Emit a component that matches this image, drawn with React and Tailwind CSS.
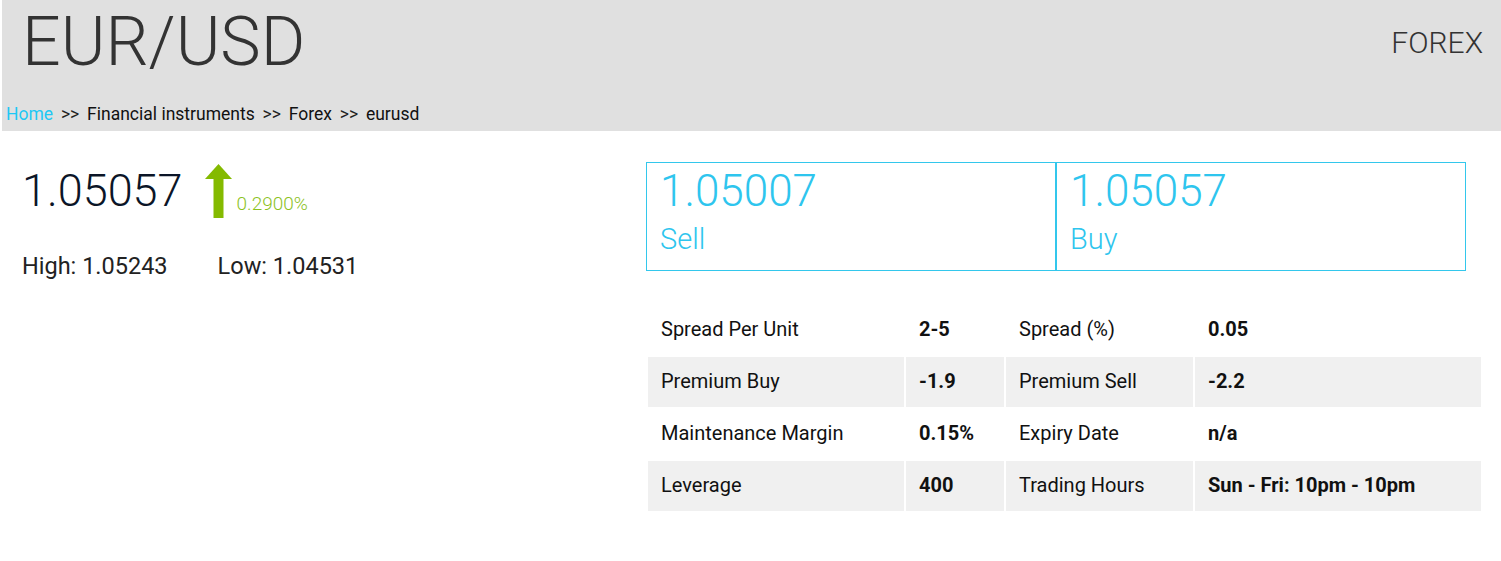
export default function App() {
  const rows = [
    ["Spread Per Unit", "2-5", "Spread (%)", "0.05"],
    ["Premium Buy", "-1.9", "Premium Sell", "-2.2"],
    ["Maintenance Margin", "0.15%", "Expiry Date", "n/a"],
    ["Leverage", "400", "Trading Hours", "Sun - Fri: 10pm - 10pm"],
  ];

  return (
    <div className="w-[1501px] min-h-[561px] bg-white font-['Roboto',sans-serif] text-[#222]">
      {/* header */}
      <div className="ml-[2px] h-[131px] bg-[#e0e0e0] flex flex-col">
        <div className="flex justify-between items-start">
          <h1 className="ml-[20px] mt-[2px] text-[68px] leading-[80px] font-light text-[#333]">EUR/USD</h1>
          <div className="mr-[18px] mt-[26px] text-[30px] leading-[34px] font-light text-[#333]">FOREX</div>
        </div>
        <div className="mt-[20px] ml-[4px] text-[17.5px] leading-[24px] text-[#111]">
          <span className="text-[#1ec8f5]">Home</span>
          <span className="text-[#222] px-[3.5px]"> &gt;&gt; </span>
          <span>Financial instruments</span>
          <span className="text-[#222] px-[3.5px]"> &gt;&gt; </span>
          <span>Forex</span>
          <span className="text-[#222] px-[3.5px]"> &gt;&gt; </span>
          <span>eurusd</span>
        </div>
      </div>

      {/* body */}
      <div className="flex pt-[31px]">
        <div className="w-[646px] pl-[22px]">
          <div className="flex items-start">
            <div className="text-[45px] leading-[56px] font-light text-[#0b1527] mt-[1px]">1.05057</div>
            <svg className="ml-[22px] mt-[2px]" width="27" height="54" viewBox="0 0 27 54">
              <polygon points="13.5,0 27,15 0,15" fill="#84ba00" />
              <rect x="8.5" y="14" width="10" height="40" fill="#84ba00" />
            </svg>
            <div className="ml-[5px] mt-[31px] text-[19px] leading-[22px] font-light text-[#8cc21e]">0.2900%</div>
          </div>
          <div className="mt-[33px] flex text-[23.5px] leading-[28px] text-[#222]">
            <span>High: 1.05243</span>
            <span className="ml-[50px]">Low: 1.04531</span>
          </div>
        </div>

        <div className="flex flex-col">
          <div className="flex w-[820px] h-[109px] border border-[#33c7ec]">
            <div className="w-[410px] border-r-2 border-[#33c7ec] pl-[13px] pt-[2px] text-[#2ec5ee] font-light">
              <div className="text-[44px] leading-[52px]">1.05007</div>
              <div className="text-[29px] leading-[44px]">Sell</div>
            </div>
            <div className="flex-1 pl-[13px] pt-[2px] text-[#2ec5ee] font-light">
              <div className="text-[44px] leading-[52px]">1.05057</div>
              <div className="text-[29px] leading-[44px]">Buy</div>
            </div>
          </div>

          <div className="mt-[34px] ml-[2px] grid grid-cols-[256px_98px_187px_286px] gap-[2px] text-[20px] text-[#111]">
            {rows.map((r, i) =>
              r.map((c, j) => (
                <div
                  key={i + "-" + j}
                  className={
                    "h-[50px] flex items-center pl-[13px] pb-[3px] " +
                    (i % 2 === 1 ? "bg-[#f0f0f0] " : "") +
                    (j % 2 === 1 ? "font-bold" : "")
                  }
                >
                  {c}
                </div>
              ))
            )}
          </div>
        </div>
      </div>
    </div>
  );
}
